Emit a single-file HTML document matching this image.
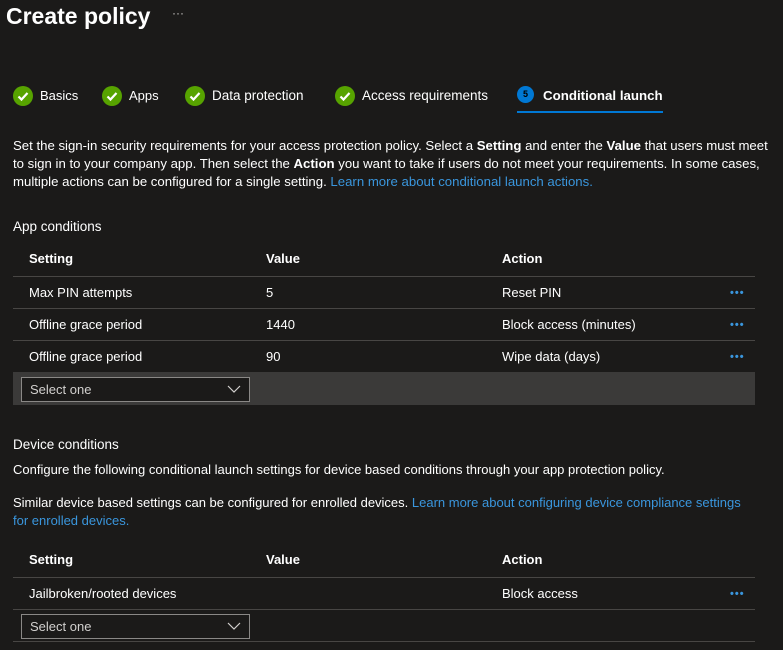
<!DOCTYPE html>
<html><head><meta charset="utf-8"><style>
body{margin:0;width:783px;height:650px;background:#1b1a19;color:#fff;font-family:"Liberation Sans",sans-serif;font-size:13px;position:relative;overflow:hidden}
.a{position:absolute;white-space:nowrap}
.t{line-height:18px}
.chk{position:absolute;width:20px;height:20px;border-radius:50%;background:#57a300}
.chk svg{position:absolute;left:0;top:0}
.line{position:absolute;left:13px;width:742px;height:1px;background:#484644}
.b{font-weight:bold}
.lk{color:#3a96dd}
.dots{position:absolute;left:730px;color:#3a96dd;font-size:11px;letter-spacing:1px;font-weight:bold}
.dd{position:absolute;left:21px;width:227px;height:23px;border:1px solid #8a8886;background:#1b1a19;box-sizing:content-box}
.dd span{position:absolute;left:8px;top:4px;color:#d2d0ce}
.dd svg{position:absolute;right:8px;top:6px}
</style></head><body>
<div class="a" style="left:6px;top:3px;font-size:23px;font-weight:bold">Create policy</div>
<div class="a" style="left:172px;top:6px;font-size:12px;color:#c8c6c4">···</div>

<div class="chk" style="left:13px;top:86px"><svg width="20" height="20"><path d="M5.5 10.5l3 3 6-6.5" stroke="#fff" stroke-width="2.2" fill="none"/></svg></div>
<div class="a" style="left:40px;top:88px">Basics</div>
<div class="chk" style="left:102px;top:86px"><svg width="20" height="20"><path d="M5.5 10.5l3 3 6-6.5" stroke="#fff" stroke-width="2.2" fill="none"/></svg></div>
<div class="a" style="left:129px;top:88px">Apps</div>
<div class="chk" style="left:185px;top:86px"><svg width="20" height="20"><path d="M5.5 10.5l3 3 6-6.5" stroke="#fff" stroke-width="2.2" fill="none"/></svg></div>
<div class="a" style="left:212px;top:88px;font-size:13.5px">Data protection</div>
<div class="chk" style="left:335px;top:86px"><svg width="20" height="20"><path d="M5.5 10.5l3 3 6-6.5" stroke="#fff" stroke-width="2.2" fill="none"/></svg></div>
<div class="a" style="left:362px;top:88px;font-size:13.5px">Access requirements</div>
<div class="a" style="left:517px;top:86px;width:17px;height:17px;border-radius:50%;background:#0078d4;color:#000;font-size:9px;font-weight:bold;text-align:center;line-height:17px">5</div>
<div class="a b" style="left:543px;top:88px;font-size:13.3px">Conditional launch</div>
<div class="a" style="left:517px;top:111px;width:146px;height:2px;background:#0078d4"></div>

<div class="a t" style="left:13px;top:137px;font-size:13.2px">Set the sign-in security requirements for your access protection policy. Select a <b>Setting</b> and enter the <b>Value</b> that users must meet<br>to sign in to your company app. Then select the <b>Action</b> you want to take if users do not meet your requirements. In some cases,<br>multiple actions can be configured for a single setting. <span class="lk">Learn more about conditional launch actions.</span></div>

<div class="a" style="left:13px;top:219px;font-size:13.5px">App conditions</div>
<div class="a b" style="left:29px;top:251px">Setting</div>
<div class="a b" style="left:266px;top:251px">Value</div>
<div class="a b" style="left:502px;top:251px">Action</div>
<div class="line" style="top:276px"></div>
<div class="a" style="left:29px;top:285px">Max PIN attempts</div><div class="a" style="left:266px;top:285px">5</div><div class="a" style="left:502px;top:285px">Reset PIN</div><div class="dots" style="top:287px">•••</div>
<div class="line" style="top:308px"></div>
<div class="a" style="left:29px;top:317px">Offline grace period</div><div class="a" style="left:266px;top:317px">1440</div><div class="a" style="left:502px;top:317px">Block access (minutes)</div><div class="dots" style="top:319px">•••</div>
<div class="line" style="top:340px"></div>
<div class="a" style="left:29px;top:349px">Offline grace period</div><div class="a" style="left:266px;top:349px">90</div><div class="a" style="left:502px;top:349px">Wipe data (days)</div><div class="dots" style="top:351px">•••</div>
<div class="a" style="left:13px;top:372px;width:742px;height:33px;background:#3b3a39"></div>
<div class="dd" style="top:377px"><span>Select one</span><svg width="14" height="10"><path d="M1 2l6 6 6-6" stroke="#d2d0ce" stroke-width="1.2" fill="none"/></svg></div>

<div class="a" style="left:13px;top:437px;font-size:13.5px">Device conditions</div>
<div class="a" style="left:13px;top:462px;font-size:13px">Configure the following conditional launch settings for device based conditions through your app protection policy.</div>
<div class="a t" style="left:13px;top:494px;font-size:13px">Similar device based settings can be configured for enrolled devices. <span class="lk">Learn more about configuring device compliance settings</span><br><span class="lk">for enrolled devices.</span></div>
<div class="a b" style="left:29px;top:552px">Setting</div>
<div class="a b" style="left:266px;top:552px">Value</div>
<div class="a b" style="left:502px;top:552px">Action</div>
<div class="line" style="top:577px"></div>
<div class="a" style="left:29px;top:586px">Jailbroken/rooted devices</div><div class="a" style="left:502px;top:586px">Block access</div><div class="dots" style="top:588px">•••</div>
<div class="line" style="top:609px"></div>
<div class="dd" style="top:614px"><span>Select one</span><svg width="14" height="10"><path d="M1 2l6 6 6-6" stroke="#d2d0ce" stroke-width="1.2" fill="none"/></svg></div>
<div class="line" style="top:641px"></div>
</body></html>
